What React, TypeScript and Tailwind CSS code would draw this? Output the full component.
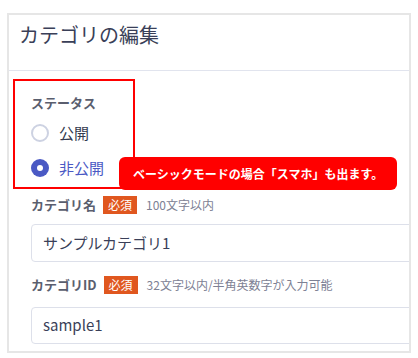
const font = { fontFamily: '"Noto Sans CJK JP", "Noto Sans", sans-serif' }

function Required() {
  return (
    <span className="flex h-[18px] items-center bg-[#e0571f] px-[5px] text-[12px] font-normal leading-none text-white">
      必須
    </span>
  )
}

export default function App() {
  return (
    <div className="relative h-[358px] w-[418px] overflow-hidden bg-white pl-[7px] pt-[13px]" style={font}>
      <div className="w-[404px] overflow-hidden border-2 border-[#e6e6e6] bg-white">
        <div className="h-[56px] border-b border-[#e1e4ee] pl-[10px] pt-[6px]">
          <h1 className="text-[20px] leading-[28px] text-[#3a3f58]">カテゴリの編集</h1>
        </div>

        <div className="pt-[8px] pb-[7px]">
          <div className="ml-[4px] h-[110px] w-[122px] border-2 border-[#ff0000] pl-[16px] pt-[12px]">
            <p className="text-[13px] font-bold leading-[20px] text-[#5a5e6e]">ステータス</p>
            <div className="mt-[10px] flex items-center gap-[10px]">
              <span className="h-[18px] w-[18px] rounded-full border-2 border-[#cdd2e2]" />
              <span className="text-[15px] leading-[20px] text-[#333a4f]">公開</span>
            </div>
            <div className="mt-[15px] flex items-center gap-[10px]">
              <span className="flex h-[18px] w-[18px] items-center justify-center rounded-full bg-[#4a59c4]">
                <span className="h-[6px] w-[6px] rounded-full bg-white" />
              </span>
              <span className="text-[15px] leading-[20px] text-[#4a59c4]">非公開</span>
            </div>
          </div>

          <div className="pl-[22px]">
            <div className="mt-[6px] flex h-[20px] items-center">
              <span className="text-[13px] font-bold text-[#5a5e6e]">カテゴリ名</span>
              <span className="ml-[7px]"><Required /></span>
              <span className="ml-[9px] text-[12px] text-[#7d8194]">100文字以内</span>
            </div>
            <div className="mt-[9px] flex h-[38px] w-[420px] items-center rounded-[4px] border border-[#dde0ea] pl-[11px] text-[15px] text-[#3a3f58]">
              サンプルカテゴリ1
            </div>

            <div className="mt-[13px] flex h-[20px] items-center">
              <span className="text-[13px] font-bold text-[#5a5e6e]">カテゴリID</span>
              <span className="ml-[7px]"><Required /></span>
              <span className="ml-[9px] text-[12px] text-[#7d8194]">32文字以内/半角英数字が入力可能</span>
            </div>
            <div className="mt-[12px] flex h-[37px] w-[420px] items-center rounded-[4px] border border-[#dde0ea] pl-[11px] text-[15px] text-[#3a3f58]">
              sample1
            </div>
          </div>
        </div>
      </div>

      <div className="absolute left-[119px] top-[157px] flex h-[33px] w-[278px] items-center whitespace-nowrap rounded-[6px] bg-[#ff0000] pl-[14px] text-[12px] font-bold text-white">
        ベーシックモードの場合「スマホ」も出ます。
      </div>
    </div>
  )
}
